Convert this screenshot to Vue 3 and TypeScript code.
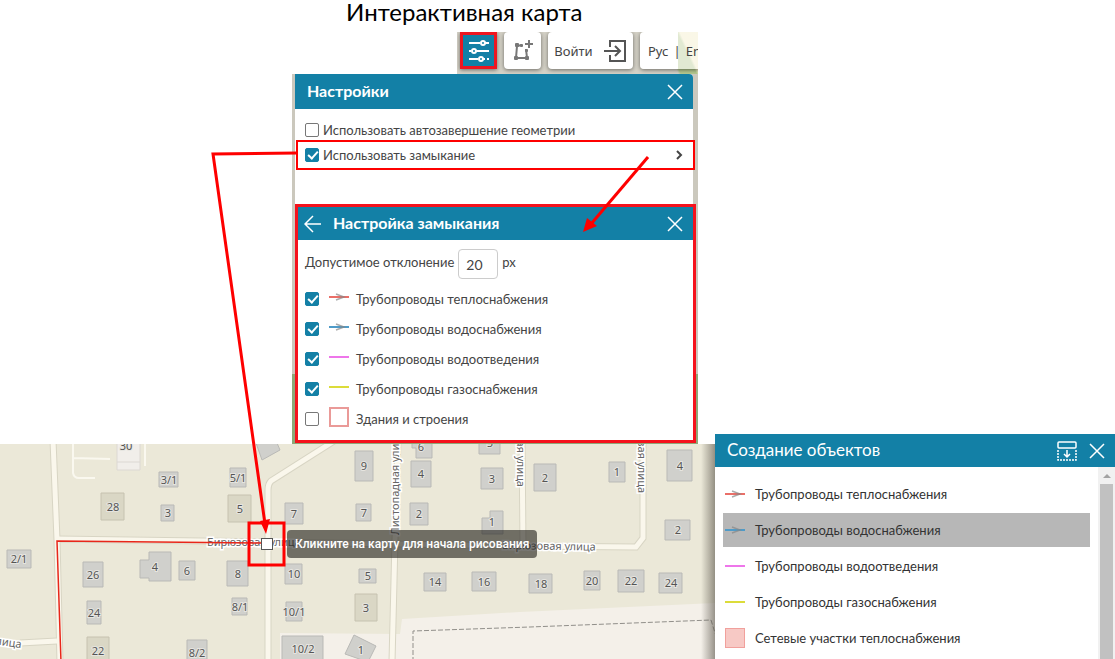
<script setup lang="ts">
import { ref } from 'vue'

interface Layer {
  id: string
  name: string
  color: string
  arrow?: boolean
  box?: boolean
  on: boolean
}

interface House {
  label: string
  points: string
  x: number
  y: number
  tan?: boolean
}

const autoComplete = ref(false)
const snapping = ref(true)
const tolerance = ref('20')
const selected = ref('water')

const layers = ref<Layer[]>([
  { id: 'heat', name: 'Трубопроводы теплоснабжения', color: '#ea6f68', arrow: true, on: true },
  { id: 'water', name: 'Трубопроводы водоснабжения', color: '#4f9bc8', arrow: true, on: true },
  { id: 'sewer', name: 'Трубопроводы водоотведения', color: '#ee76ea', on: true },
  { id: 'gas', name: 'Трубопроводы газоснабжения', color: '#dcdc3a', on: true },
  { id: 'building', name: 'Здания и строения', color: '#ea9a98', box: true, on: false },
])

const objects: Layer[] = [
  ...layers.value.slice(0, 4),
  { id: 'area', name: 'Сетевые участки теплоснабжения', color: '#f1a09c', box: true, on: false },
]

function rect(label: string, x1: number, y1: number, x2: number, y2: number, tan = false): House {
  return {
    label,
    points: `${x1},${y1} ${x2},${y1} ${x2},${y2} ${x1},${y2}`,
    x: Math.round((x1 + x2) / 2),
    y: Math.round((y1 + y2) / 2) + 4,
    tan,
  }
}

const houses: House[] = [
  rect('3/1', 159, 472, 178, 487),
  rect('3', 161, 505, 174, 521),
  rect('28', 101, 493, 124, 520, true),
  rect('2/1', 7, 550, 31, 568),
  rect('26', 83, 562, 103, 587),
  { label: '4', points: '149,552 171,552 171,581 149,581 149,578 140,578 140,560 149,560', x: 155, y: 571 },
  rect('6', 179, 561, 195, 580),
  rect('24', 87, 601, 101, 624),
  rect('22', 87, 637, 109, 664, true),
  rect('8/2', 187, 640, 207, 666),
  rect('8', 227, 561, 248, 586),
  rect('8/1', 232, 598, 247, 615),
  rect('5/1', 230, 468, 246, 487),
  rect('5', 228, 495, 251, 522, true),
  { label: '', points: '255,440 274,436 280,450 262,460', x: 0, y: 0 },
  rect('7', 285, 503, 303, 524),
  rect('10', 285, 564, 302, 584),
  rect('10/1', 286, 602, 302, 621),
  rect('10/2', 282, 636, 323, 662),
  rect('9', 355, 451, 373, 481),
  rect('7', 356, 504, 371, 521),
  rect('5', 359, 569, 376, 583),
  rect('3', 355, 594, 377, 621, true),
  { label: '1', points: '354,635 376,646 368,662 345,654', x: 361, y: 654 },
  { label: '6', points: '412,440 432,440 432,458 416,458 416,448 412,448', x: 421, y: 451 },
  rect('4', 411, 461, 431, 487),
  rect('2', 410, 503, 428, 525),
  rect('14', 424, 573, 446, 591),
  rect('5', 479, 432, 500, 454),
  rect('3', 481, 468, 503, 489),
  rect('2', 534, 464, 556, 491),
  { label: '1', points: '490,511 503,511 503,534 482,534 482,518 490,518', x: 492, y: 526 },
  rect('1', 609, 462, 625, 482),
  rect('4', 667, 450, 692, 481),
  rect('2', 665, 520, 690, 540),
  rect('16', 472, 572, 496, 591),
  rect('18', 529, 574, 552, 593),
  rect('20', 584, 571, 600, 590),
  rect('22', 618, 570, 644, 592),
  rect('24', 659, 573, 682, 593),
]

const roads: string[] = [
  'M53 440 L57 540 L60 662',
  'M57 539 L265 542 L520 546 L636 547 L643 538 V440',
  'M20 643 L57 641',
  'M334 441 L271 481 Q268 484 268 490 V662',
  'M398 440 L395 540 L392 662',
  'M522 440 L523 546',
]
</script>

<template>
  <div class="page">
    <h1 class="title">Интерактивная карта</h1>

    <main class="stack">
      <div class="toolbar">
        <button class="tool active" type="button" aria-label="Настройки">
          <svg width="24" height="24" viewBox="0 0 24 24" fill="none" stroke="#fff" stroke-width="2">
            <path d="M2 4H13M18 4H22M2 12H4M9 12H22M2 20H11M16 20H18M20 20H22" />
            <circle cx="16" cy="4" r="2" /><circle cx="7" cy="12" r="2" /><circle cx="14" cy="20" r="2" />
          </svg>
        </button>
        <button class="tool" type="button" aria-label="Создать объект">
          <svg width="24" height="24" viewBox="0 0 24 24" fill="none" stroke="#777" stroke-width="2">
            <path d="M6 7L5 19H16L15 10M6 7L11 6" />
            <path d="M18 1V9M14 5H22" />
            <g fill="#777" stroke="none">
              <rect x="4" y="4" width="4" height="4" rx="1" /><rect x="3" y="17" width="4" height="4" rx="1" />
              <rect x="14" y="17" width="4" height="4" rx="1" /><rect x="9" y="5" width="3" height="3" rx="1" />
              <rect x="14" y="10" width="3" height="3" rx="1" />
            </g>
          </svg>
        </button>
        <button class="tool login" type="button">
          Войти
          <svg width="24" height="24" viewBox="0 0 24 24" fill="none" stroke="#555" stroke-width="2">
            <path d="M7 8V2H22V22H7V16M1 12H17M12 7L17 12L12 17" />
          </svg>
        </button>
        <div class="tool langs">
          <button type="button">Рус</button><span>|</span><button type="button">En</button>
        </div>
      </div>

      <div class="backdrop">
        <section class="panel settings">
          <header class="bar">
            <h2>Настройки</h2>
            <button class="icon" type="button" aria-label="Закрыть">
              <svg width="18" height="18" viewBox="0 0 18 18" stroke="#fff" stroke-width="1.5"><path d="M2 2L16 16M16 2L2 16" /></svg>
            </button>
          </header>
          <div class="options">
            <label class="option"><input v-model="autoComplete" type="checkbox" />Использовать автозавершение геометрии</label>
            <label class="option">
              <input v-model="snapping" type="checkbox" />Использовать замыкание
              <svg class="chevron" width="8" height="12" viewBox="0 0 8 12" fill="none" stroke="#444" stroke-width="2"><path d="M2 2L6 6L2 10" /></svg>
            </label>
          </div>
        </section>

        <section class="panel snapping">
          <header class="bar">
            <button class="icon back" type="button" aria-label="Назад">
              <svg width="18" height="18" viewBox="0 0 18 18" fill="none" stroke="#fff" stroke-width="1.5"><path d="M17 9H2M9 1L1 9L9 17" /></svg>
            </button>
            <h2>Настройка замыкания</h2>
            <button class="icon" type="button" aria-label="Закрыть">
              <svg width="18" height="18" viewBox="0 0 18 18" stroke="#fff" stroke-width="1.5"><path d="M2 2L16 16M16 2L2 16" /></svg>
            </button>
          </header>
          <div class="tolerance">
            <label for="tolerance">Допустимое отклонение</label>
            <input id="tolerance" v-model="tolerance" type="text" />
            <span>px</span>
          </div>
          <label v-for="l in layers" :key="l.id" class="layer">
            <input v-model="l.on" type="checkbox" />
            <svg class="swatch" width="20" height="20" viewBox="0 0 20 20" fill="none">
              <rect v-if="l.box" x="1" y="1" width="18" height="18" :stroke="l.color" stroke-width="2" />
              <path v-else d="M0 10H20" :stroke="l.color" stroke-width="2" />
              <path v-if="l.arrow" d="M7 7L15 10L7 13" stroke="#888" stroke-opacity=".7" stroke-width="1.5" />
            </svg>
            <span>{{ l.name }}</span>
          </label>
        </section>
      </div>
    </main>

    <div class="lower">
      <div class="map">
        <svg class="canvas" viewBox="0 444 715 215" preserveAspectRatio="xMinYMin slice">
          <rect y="444" width="715" height="215" fill="#ebe8d8" />
          <path d="M280 633L400 634L402 619L520 612L715 603V662H280Z" fill="#f4f0e9" />
          <g class="lane"><path d="M73 440V473Q74 478 79 478H95M73 458L110 459M145 440V466" /></g>
          <path v-for="d in roads" :key="'c' + d" class="casing" :d="d" />
          <path v-for="d in roads" :key="d" class="road" :d="d" />
          <path d="M413 662V631L530 627L711 620L716 636" fill="none" stroke="#918f8a" stroke-dasharray="5 2" />
          <path d="M117 440H140V470H117ZM117 462H140" fill="#f1eeea" stroke="#dcd8d3" />
          <text class="num" x="126" y="450">30</text>
          <g v-for="(h, i) in houses" :key="i">
            <polygon :points="h.points" :class="h.tan ? 'tan' : 'grey'" />
            <text v-if="h.label" class="num" :x="h.x" :y="h.y">{{ h.label }}</text>
          </g>
          <text class="street" x="207" y="546">Бирюзовая улица</text>
          <text class="street" transform="translate(502 549) rotate(1)">Бирюзовая улица</text>
          <text class="street" transform="translate(399 535) rotate(-90)">Листопадная улица</text>
          <text class="street end" transform="translate(517 487) rotate(90)">Листопадная улица</text>
          <text class="street end" transform="translate(638 493) rotate(90)">Каштановая улица</text>
          <text class="street end" transform="translate(21 648) rotate(8)">улица</text>
          <path d="M267 543L57 541L61 662" fill="none" stroke="#e8261a" stroke-width="1.5" />
        </svg>
        <div class="tip" role="tooltip">Кликните на карту для начала рисования</div>
        <div class="vertex"></div>
      </div>

      <section class="create">
        <header class="bar">
          <h2>Создание объектов</h2>
          <button class="icon dock" type="button" aria-label="Свернуть">
            <svg width="20" height="20" viewBox="0 0 20 20" fill="none" stroke="#fff" stroke-width="1.5">
              <rect x="1" y="1" width="18" height="6" rx="1" />
              <path d="M1 9V19H19V8" stroke-dasharray="2 1" />
              <path d="M10 9V16M7 13L10 16L13 13" />
            </svg>
          </button>
          <button class="icon" type="button" aria-label="Закрыть">
            <svg width="18" height="18" viewBox="0 0 18 18" stroke="#fff" stroke-width="1.5"><path d="M2 2L16 16M16 2L2 16" /></svg>
          </button>
        </header>
        <div class="body">
          <div class="objects">
            <button
              v-for="o in objects"
              :key="o.id"
              type="button"
              class="object"
              :class="{ selected: selected === o.id }"
              @click="selected = o.id"
            >
              <svg width="20" height="20" viewBox="0 0 20 20" fill="none">
                <rect v-if="o.box" x="0.5" y="0.5" width="19" height="19" fill="#f7c9c5" :stroke="o.color" />
                <path v-else d="M0 10H20" :stroke="o.color" stroke-width="2" />
                <path v-if="o.arrow" d="M7 7L15 10L7 13" stroke="#888" stroke-opacity=".7" stroke-width="1.5" />
              </svg>
              <span>{{ o.name }}</span>
            </button>
          </div>
          <div class="scroll"><i class="up"></i><i class="thumb"></i></div>
        </div>
      </section>
    </div>

    <svg class="notes" width="715" height="659" viewBox="0 0 715 659" fill="none" stroke="#fe0000" stroke-width="3">
      <rect x="297" y="141" width="397" height="28" stroke-width="2" />
      <rect x="249" y="523" width="35" height="42" />
      <path d="M297 153L213 154L265 524" />
      <path d="M648 157L591 224" />
      <path d="M260 521L270 519L266 534ZM587 218L597 226L583 232Z" fill="#fe0000" stroke="none" />
    </svg>
  </div>
</template>

<style>
html, body { background: #fff; }
</style>

<style scoped>
* { box-sizing: border-box; }
.page {
  position: relative;
  min-height: 100vh;
  display: flex;
  flex-direction: column;
  overflow: hidden;
  font-family: Lato, "Noto Sans", sans-serif;
  font-size: 13px;
  line-height: 20px;
  color: #444;
}
button { font: inherit; color: inherit; border: 0; background: none; padding: 0; display: flex; align-items: center; }
h1, h2 { margin: 0; font-weight: 400; }
.title {
  margin-left: 346px;
  height: 32px;
  font-size: 24px;
  line-height: 24px;
  color: #000;
}
.stack { position: relative; z-index: 1; width: 406px; margin: 0 0 -10px 292px; }
.toolbar {
  display: flex;
  gap: 7px;
  height: 42px;
  margin-left: 165px;
  padding: 0 0 6px 3px;
  background: linear-gradient(65deg, #d5d2c7 0 85%, #b5c98f 86% 92%, #f2ecc4 93%);
  font-family: "Noto Sans", sans-serif;
  overflow: hidden;
}
.tool {
  flex: none;
  width: 37px;
  height: 37px;
  justify-content: center;
  border-radius: 4px;
  background: #fff;
  box-shadow: 0 1px 4px rgba(0, 0, 0, .5);
}
.tool.active { background: #1380a6; border: 3px solid #ee1620; border-radius: 0; }
.tool.login { width: 85px; gap: 10px; }
.tool.langs { width: 80px; display: flex; align-items: center; justify-content: flex-start; gap: 5px; padding-left: 8px; background: linear-gradient(90deg, #fff 0 38px, rgba(255, 255, 255, .6) 38px); }
.backdrop {
  padding: 0 2px 1px 3px;
  background: linear-gradient(#cbc8bd 0 300px, #8ea877 300px);
}
.bar { display: flex; align-items: center; height: 33px; background: #1380a6; color: #fff; }
.bar h2 { flex: 1; padding-bottom: 2px; font-size: 17px; line-height: 24px; }
.panel { background: #fff; }
.panel h2 { font-size: 16px; font-weight: 700; }
.icon { justify-content: center; width: 18px; height: 18px; }
.settings { margin-right: 3px; height: 130px; border-radius: 0 4px 0 0; }
.settings .bar { height: 35px; padding: 0 9px 0 12px; border-radius: 0 4px 0 0; }
.options { padding: 8px 10px 0; }
.option { display: flex; align-items: center; height: 25px; gap: 4px; }
.chevron { margin: 0 0 0 auto; }
input[type="checkbox"] {
  appearance: none;
  flex: none;
  width: 14px;
  height: 14px;
  margin: 0;
  border: 1px solid #777;
  border-radius: 2px;
  background: #fff;
}
input[type="checkbox"]:checked { border-color: #1380a6; background: #1380a6; }
input[type="checkbox"]:checked::after {
  content: "";
  display: block;
  width: 4px;
  height: 8px;
  margin: 0 0 0 4px;
  border: solid #fff;
  border-width: 0 2px 2px 0;
  transform: rotate(42deg);
}
.snapping { border: 3px solid #f5121c; padding-bottom: 6px; }
.snapping .bar { padding: 0 9px 0 6px; }
.back { margin-right: 11px; }
.tolerance { display: flex; height: 44px; padding: 9px 7px 0; gap: 4px; }
.tolerance label, .tolerance span { line-height: 26px; }
.tolerance input {
  width: 40px;
  height: 30px;
  padding: 0 7px;
  border: 1px solid #ccc;
  border-radius: 4px;
  font: inherit;
  font-size: 14px;
  color: #444;
}
.layer { display: flex; align-items: center; height: 30px; padding-left: 7px; }
.swatch { margin: 0 7px 4px 10px; }
.lower { flex: 1; display: flex; min-height: 225px; }
.map { position: relative; flex: 1; margin-top: 10px; overflow: hidden; background: #ebe8d8; }
.map::after {
  content: "";
  position: absolute;
  inset: 0 0 0 auto;
  width: 14px;
  background: linear-gradient(90deg, transparent, rgba(90, 85, 75, .6));
}
.canvas { position: absolute; width: 715px; height: 215px; font-family: "Noto Sans", sans-serif; }
.grey { fill: #d0d0cc; stroke: #b9b9b6; }
.tan { fill: #dad7c5; stroke: #c6c2b0; }
.num { font-size: 11px; text-anchor: middle; fill: #555; paint-order: stroke; stroke: #e6e5e0; stroke-width: 2px; }
.street { font-size: 11px; fill: #666; paint-order: stroke; stroke: #fff; stroke-width: 3px; }
.end { text-anchor: end; }
.casing { fill: none; stroke: #d8d5c4; stroke-width: 7px; }
.road { fill: none; stroke: #faf7ec; stroke-width: 5px; }
.lane path { fill: none; stroke: #faf8ef; stroke-width: 2px; }
.tip {
  position: absolute;
  left: 287px;
  top: 86px;
  padding: 4px 8px;
  border-radius: 4px;
  background: rgba(30, 28, 24, .6);
  color: #fff;
  font: 500 12px/20px Roboto, sans-serif;
  white-space: nowrap;
}
.vertex { position: absolute; left: 261px; top: 94px; width: 12px; height: 12px; border: 1px solid #555; background: #fff; }
.create { flex: none; width: 400px; display: flex; flex-direction: column; background: #fff; }
.create .bar { padding: 0 9px 0 12px; }
.create .dock { width: 20px; height: 20px; margin-right: 11px; }
.body { flex: 1; display: flex; }
.objects { flex: 1; display: flex; flex-direction: column; gap: 2px; padding: 10px 8px 0; }
.object { height: 34px; padding-left: 2px; gap: 10px; color: #333; text-align: left; }
.object.selected { background: #b7b7b7; }
.scroll { width: 17px; display: flex; flex-direction: column; align-items: center; padding-top: 7px; background: #f1f1f1; }
.up { border: 4px solid transparent; border-top: 0; border-bottom-color: #a3a3a3; }
.thumb { flex: 1; width: 13px; margin-top: 6px; background: #c1c1c1; }
.notes { position: absolute; left: 0; top: 0; z-index: 2; pointer-events: none; }
</style>
